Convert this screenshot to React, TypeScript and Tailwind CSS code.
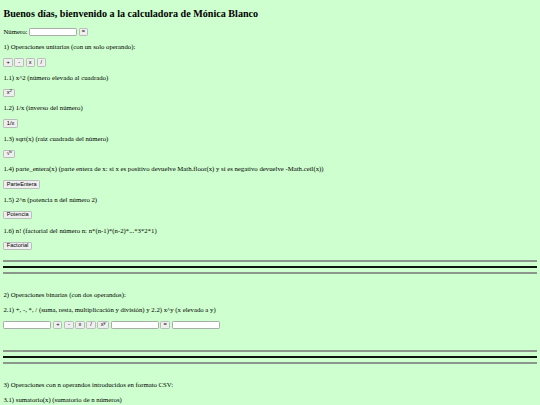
import React from "react";

const btnCls =
  "inline-flex h-[8.5px] items-center justify-center rounded-[1.2px] border border-[#b9bdb9] bg-[#efefef] px-[2.4px] font-['Liberation_Sans',Arial,sans-serif] text-[5.6px] leading-none text-black";
const opBtnCls =
  "inline-flex h-[8.5px] w-[9.4px] items-center justify-center rounded-[1.2px] border border-[#b9bdb9] bg-[#efefef] font-['Liberation_Sans',Arial,sans-serif] text-[5.6px] leading-none text-black";
const inputCls =
  "h-[8.6px] w-[48px] rounded-[1.2px] border border-[#a9ada9] bg-white";
const textCls = "h-[7.8px] whitespace-nowrap text-[6.75px] leading-[7.8px]";

function Btn({ children }: { children: React.ReactNode }) {
  return (
    <button type="button" className={btnCls}>
      <span>{children}</span>
    </button>
  );
}

function OpBtn({ children }: { children: React.ReactNode }) {
  return (
    <button type="button" className={opBtnCls}>
      <span>{children}</span>
    </button>
  );
}

function Line({ children }: { children: React.ReactNode }) {
  return <p className={textCls}>{children}</p>;
}

function BtnRow({ children }: { children: React.ReactNode }) {
  return <div className="flex h-[8.5px] items-center gap-[1.7px]">{children}</div>;
}

function Rules() {
  return (
    <div className="flex flex-col">
      <div className="h-[2px] bg-[#8b978b]" />
      <div className="mt-[4.3px] h-[2px] bg-[#0d160d]" />
      <div className="mt-[3.5px] h-[2px] bg-[#8b978b]" />
    </div>
  );
}

export default function App() {
  return (
    <div className="min-h-screen bg-[#ceffce] px-[3.4px] pt-[8.2px] font-['Liberation_Serif','Times_New_Roman',serif] text-black">
      <h2 className="h-[11.64px] whitespace-nowrap text-[10.125px] font-bold leading-[11.64px]">
        Buenos días, bienvenido a la calculadora de Mónica Blanco
      </h2>

      <div className="mt-[8.16px] flex flex-col gap-[7.15px]">
        <div className="flex h-[8px] items-center gap-[1.7px] text-[6.75px]">
          <span>Número:</span>
          <input type="text" className={inputCls} />
          <OpBtn>=</OpBtn>
        </div>

        <Line>1) Operaciones unitarias (con un solo operando):</Line>
        <BtnRow>
          <OpBtn>+</OpBtn>
          <OpBtn>-</OpBtn>
          <OpBtn>x</OpBtn>
          <OpBtn>/</OpBtn>
        </BtnRow>

        <Line>1.1) x^2 (número elevado al cuadrado)</Line>
        <BtnRow>
          <Btn>
            x<sup>2</sup>
          </Btn>
        </BtnRow>

        <Line>1.2) 1/x (inverso del número)</Line>
        <BtnRow>
          <Btn>1/x</Btn>
        </BtnRow>

        <Line>1.3) sqrt(x) (raíz cuadrada del número)</Line>
        <BtnRow>
          <Btn>
            √<sup>x</sup>
          </Btn>
        </BtnRow>

        <Line>
          1.4) parte_entera(x) (parte entera de x: si x es positivo devuelve Math.floor(x) y si es negativo
          devuelve -Math.ceil(x))
        </Line>
        <BtnRow>
          <Btn>ParteEntera</Btn>
        </BtnRow>

        <Line>1.5) 2^n (potencia n del número 2)</Line>
        <BtnRow>
          <Btn>Potencia</Btn>
        </BtnRow>

        <Line>1.6) n! (factorial del número n: n*(n-1)*(n-2)*...*3*2*1)</Line>
        <BtnRow>
          <Btn>Factorial</Btn>
        </BtnRow>
      </div>

      <div className="mt-[10.1px]">
        <Rules />
      </div>

      <div className="mt-[17px] flex flex-col gap-[7.15px]">
        <Line>2) Operaciones binarias (con dos operandos):</Line>
        <Line>2.1) +, -, *, / (suma, resta, multiplicación y división) y 2.2) x^y (x elevado a y)</Line>
        <div className="flex h-[8.6px] items-center gap-[1.7px]">
          <input type="text" className={inputCls} />
          <OpBtn>+</OpBtn>
          <OpBtn>-</OpBtn>
          <OpBtn>x</OpBtn>
          <OpBtn>/</OpBtn>
          <Btn>
            x<sup>y</sup>
          </Btn>
          <input type="text" className={inputCls} />
          <OpBtn>=</OpBtn>
          <input type="text" className={inputCls} />
        </div>
      </div>

      <div className="mt-[20.7px]">
        <Rules />
      </div>

      <div className="mt-[17px] flex flex-col gap-[7.15px] pb-[8px]">
        <Line>3) Operaciones con n operandos introducidos en formato CSV:</Line>
        <Line>3.1) sumatorio(x) (sumatorio de n números)</Line>
      </div>
    </div>
  );
}
